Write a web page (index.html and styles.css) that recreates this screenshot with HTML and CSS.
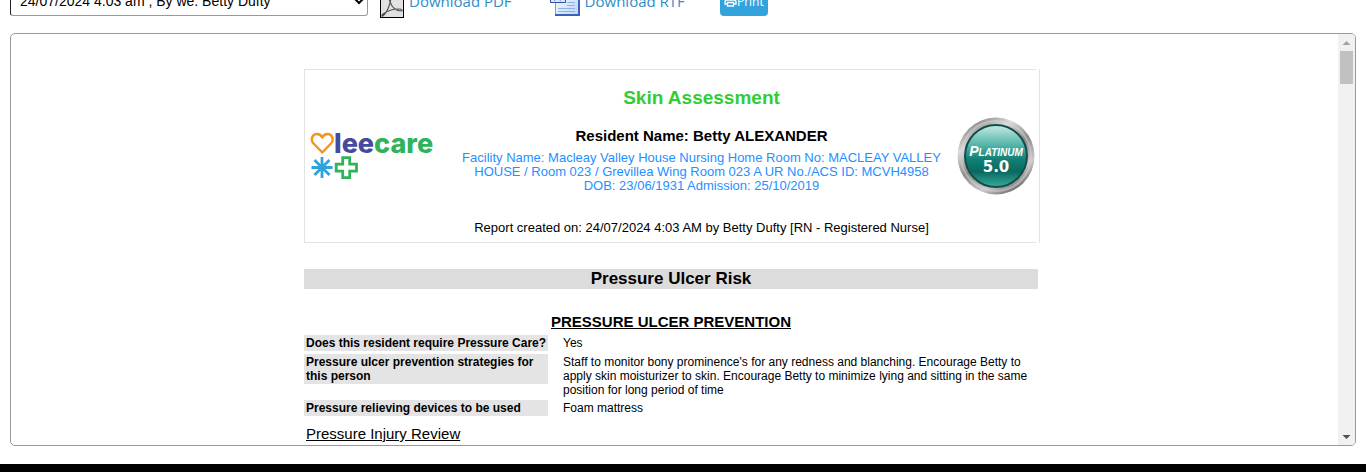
FILE: index.html
```html
<!DOCTYPE html>
<html lang="en">
<head>
<meta charset="utf-8">
<title>Skin Assessment</title>
<link rel="stylesheet" href="styles.css">
</head>
<body>
<div class="toolbar">
  <select class="version" aria-label="Report version"><option>24/07/2024 4.03 am , By we. Betty Dufty</option></select>
  <a class="download pdf" href="#">
    <svg width="24" height="34" viewBox="0 0 24 34" aria-hidden="true">
      <rect x=".5" y=".5" width="23" height="33" fill="#e2e2e2" stroke="#000"/>
      <path d="M2 32c3-1 6-6 8-13 1-4 1-7 0-7s-1 3 0 6c2 5 6 9 11 9 2 0 1-2-2-2-6 0-12 2-16 5-2 2-1 3 1 1" fill="none" stroke="#555" stroke-width="1.2"/>
    </svg>
    <span>Download PDF</span>
  </a>
  <a class="download rtf" href="#">
    <svg width="30" height="30" viewBox="0 0 30 30" aria-hidden="true">
      <defs><linearGradient id="page" x2="1" y2="1"><stop stop-color="#fff"/><stop offset="1" stop-color="#bdd6f8"/></linearGradient></defs>
      <path d="M5.500 .5h23v28h-23z" fill="url(#page)" stroke="#7f9fdc"/>
      <path d="M29 1v28H5" fill="none" stroke="#3a62b8" stroke-width="2"/>
      <path d="M17 16.500h8M17 19.500h8M8 22.500h17M8 25.500h17" stroke="#8fb1e6"/>
      <path d="M.5 2.500h15v14H.5z" fill="#dce9fc" stroke="#2c4fa3"/>
      <path d="M3 4l2 8 2.500-7L10 12l2-8" fill="none" stroke="#2450a8" stroke-width="2"/>
    </svg>
    <span>Download RTF</span>
  </a>
  <button class="print" type="button">
    <svg width="13" height="12" viewBox="0 0 13 12" fill="none" stroke="#fff" stroke-width="1.300" aria-hidden="true"><path d="M3.500 5V1h6v4M3 9H1V7q0-2 2-2h7q2 0 2 2v2h-2M3.500 7.500h6V11h-6z"/></svg>
    <span>Print</span>
  </button>
</div>

<main class="viewer">
  <div class="page">
    <article class="report">
      <header class="report-frame">
        <div class="report-header">
          <svg class="brand" width="124" height="48" viewBox="0 0 124 48" role="img" aria-label="leecare">
            <path d="M12.300 20.500 3.500 11.500C0 7.500 2.500 2 7 2c2.500 0 4.300 1.500 5.300 3.500C13.300 3.500 15 2 17.500 2c4.500 0 7 5.500 3.500 9.500z" fill="none" stroke="#f7941e" stroke-width="2.500" stroke-linejoin="round"/>
            <g stroke="#2ea3dc" stroke-width="2.800"><path d="M12 25v21M1.500 35.500h21M4.500 28l15 15M19.500 28l-15 15"/></g>
            <path d="M32.700 25.700h7v6.500h6.800v7h-6.800v6.500h-7v-6.500h-6.500v-7h6.500z" fill="none" stroke="#2fb35a" stroke-width="2.800"/>
            <text class="wordmark" x="24" y="21"><tspan fill="#444b9e">lee</tspan><tspan fill="#2fb35a">care</tspan></text>
          </svg>
          <div class="identity">
            <h1>Skin Assessment</h1>
            <h2>Resident Name: Betty ALEXANDER</h2>
            <p class="details">Facility Name: Macleay Valley House Nursing Home Room No: MACLEAY VALLEY<br>HOUSE / Room 023 / Grevillea Wing Room 023 A UR No./ACS ID: MCVH4958<br>DOB: 23/06/1931 Admission: 25/10/2019</p>
            <p class="created">Report created on: 24/07/2024 4:03 AM by Betty Dufty [RN - Registered Nurse]</p>
          </div>
          <svg class="badge" width="78" height="78" viewBox="0 0 78 78" role="img" aria-label="Platinum 5.0">
            <defs>
              <linearGradient id="rim" x1=".2" x2=".8" y2="1"><stop stop-color="#777"/><stop offset=".25" stop-color="#ddd"/><stop offset=".5" stop-color="#888"/><stop offset=".75" stop-color="#ccc"/><stop offset="1" stop-color="#555"/></linearGradient>
              <linearGradient id="glass" x2="0" y2="1"><stop stop-color="#c4ebe5"/><stop offset=".35" stop-color="#4bafa4"/><stop offset=".55" stop-color="#128075"/><stop offset=".75" stop-color="#08695f"/><stop offset="1" stop-color="#39ab9d"/></linearGradient>
            </defs>
            <circle cx="39" cy="39" r="38.500" fill="url(#rim)"/>
            <circle cx="39" cy="39" r="35" fill="none" stroke="#d5d5d5" stroke-opacity=".5" stroke-width="2"/>
            <circle cx="39" cy="39" r="31" fill="url(#glass)" stroke="#164d49" stroke-width="2"/>
            <text class="badge-name" x="39" y="39"><tspan font-size="14">P</tspan>LATINUM</text>
            <text class="badge-version" x="39" y="55">5.0</text>
          </svg>
        </div>
      </header>

      <section class="body">
        <h2 class="band">Pressure Ulcer Risk</h2>
        <h3 class="topic">PRESSURE ULCER PREVENTION</h3>
        <table class="answers">
          <tr><th scope="row"><span>Does this resident require Pressure Care?</span></th><td>Yes</td></tr>
          <tr><th scope="row"><span>Pressure ulcer prevention strategies for this person</span></th><td>Staff to monitor bony prominence's for any redness and blanching. Encourage Betty to apply skin moisturizer to skin. Encourage Betty to minimize lying and sitting in the same position for long period of time</td></tr>
          <tr><th scope="row"><span>Pressure relieving devices to be used</span></th><td>Foam mattress</td></tr>
        </table>
        <h3 class="review">Pressure Injury Review</h3>
      </section>
    </article>
  </div>
  <div class="scrollbar" aria-hidden="true">
    <svg width="17" height="17"><path d="M4.500 11h8l-4-4z" fill="#a3a3a3"/></svg>
    <div class="thumb"></div>
    <svg class="down" width="17" height="17"><path d="M4.500 7h8l-4 4z" fill="#505050"/></svg>
  </div>
</main>
<footer class="taskbar"></footer>
</body>
</html>
```
FILE: styles.css
```css
* { box-sizing: border-box; }

body {
  margin: 0;
  height: 100vh;
  display: flex;
  flex-direction: column;
  overflow: hidden;
  background: #fff;
  color: #000;
  font-family: "Liberation Sans", Arial, sans-serif;
}

h1, h2, h3, p { margin: 0; }

.toolbar {
  display: flex;
  align-items: center;
  flex: none;
  height: 34px;
  margin: -16px 10px 15px;
}

.version {
  width: 358px;
  height: 30px;
  padding: 0 0 0 5px;
  border: 1px solid #999;
  border-left-color: #222;
  border-radius: 3px;
  background: #fff;
  color: #000;
  font: 14px "Liberation Sans", Arial, sans-serif;
}

.download {
  display: flex;
  align-items: center;
  gap: 5px;
  color: #2f8ccb;
  font: 15px/20px "Open Sans", "Noto Sans", sans-serif;
  text-decoration: none;
}

.pdf { margin-left: 12px; }
.rtf { margin-left: 38px; }

.print {
  display: flex;
  align-items: center;
  justify-content: center;
  width: 48px;
  height: 30px;
  margin-left: 35px;
  padding: 0;
  border: 0;
  border-radius: 4px;
  background: #33a3dc;
  color: #fff;
  font: 12px "Open Sans", "Noto Sans", sans-serif;
}

.viewer {
  flex: 1;
  min-height: 0;
  display: flex;
  margin: 0 10px 18px;
  border: 1px solid #999;
  border-radius: 5px;
  overflow: hidden;
}

.page {
  flex: 1;
  overflow: hidden;
  padding: 35px 5px 0 0;
}

.report {
  max-width: 736px;
  margin: 0 auto;
}

.report-frame {
  padding-right: 3px;
  border-right: 1px solid #e3e3e3;
}

.report-header {
  display: flex;
  align-items: center;
  padding: 0 1px 0 5px;
  border: solid #e3e3e3;
  border-width: 1px 0 1px 1px;
}

.identity {
  flex: 1;
  padding: 16px 0 6px 12px;
  text-align: center;
}

.identity h1 {
  color: #32cd32;
  font-size: 19px;
  line-height: 24px;
}

.identity h2 {
  margin-top: 16px;
  font-size: 15px;
  line-height: 20px;
}

.details {
  margin-top: 5px;
  color: #1e90ff;
  font-size: 13px;
  line-height: 14px;
}

.created {
  margin-top: 27px;
  font-size: 13px;
  line-height: 16px;
}

.brand, .badge { flex: none; }

.wordmark { font: 800 27px Inter, sans-serif; }

.badge-name {
  fill: #fff;
  font: italic bold 10px "Liberation Sans", sans-serif;
  text-anchor: middle;
}

.badge-version {
  fill: #fff;
  font: bold 15px "DejaVu Sans", sans-serif;
  text-anchor: middle;
}

.body { padding-right: 2px; }

.band {
  margin-top: 26px;
  background: #dcdcdc;
  font-size: 17px;
  line-height: 20px;
  text-align: center;
}

.topic {
  margin-top: 24px;
  font-size: 15px;
  line-height: 18px;
  text-align: center;
  text-decoration: underline;
}

.answers {
  width: 100%;
  margin-top: 1px;
  border-spacing: 0 3px;
  font-size: 12px;
  line-height: 14px;
}

.answers th {
  width: 244px;
  padding: 0;
  text-align: left;
  vertical-align: top;
}

.answers th span {
  display: block;
  padding: 1px 0 1px 2px;
  background: #e4e4e4;
}

.answers td {
  padding: 1px 0 0 15px;
  vertical-align: top;
}

.review {
  margin-top: 5px;
  padding-left: 2px;
  font-size: 15px;
  font-weight: normal;
  line-height: 20px;
  text-decoration: underline;
}

.scrollbar {
  display: flex;
  flex-direction: column;
  flex: none;
  width: 17px;
  background: #f1f1f1;
}

.scrollbar svg { flex: none; }

.thumb {
  height: 33px;
  margin: 0 2px;
  background: #c1c1c1;
}

.down { margin-top: auto; }

.taskbar {
  flex: none;
  height: 8px;
  background: #000;
}
```
